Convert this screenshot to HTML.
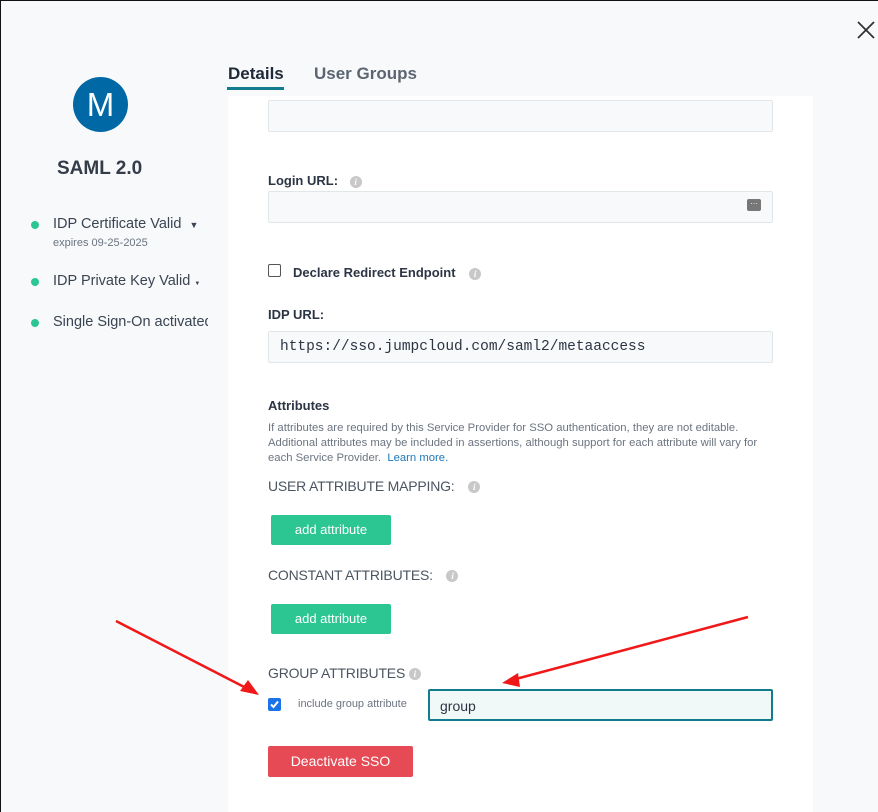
<!DOCTYPE html>
<html><head><meta charset="utf-8">
<style>
*{box-sizing:border-box;margin:0;padding:0}
body{width:878px;height:812px;overflow:hidden;background:#f7f9fb;font-family:"Liberation Sans",sans-serif;color:#2c3543;position:relative}
.frame{position:absolute;left:0;top:0;width:878px;height:812px;border-top:1px solid #111;border-left:1px solid #111;pointer-events:none}
.a{position:absolute}
.panel{left:228px;top:96px;width:585px;height:716px;background:#fff}
.inp{position:absolute;left:268px;width:505px;height:32px;background:#f7f9fa;border:1.5px solid #e1e7e8;border-radius:2px}
.lbl{position:absolute;left:268px;font-size:13px;font-weight:bold;color:#2c3543}
.info{display:inline-block;width:12px;height:12px;border-radius:50%;background:#c8c8c8;color:#fff;font-size:9px;font-style:italic;font-weight:bold;text-align:center;line-height:12px;vertical-align:middle;font-family:"Liberation Serif",serif}
.cap{position:absolute;left:268px;font-size:14px;color:#4a5561;letter-spacing:-0.2px}
.btn{position:absolute;left:271px;width:120px;height:30px;background:#2cc693;color:#fff;font-size:13px;text-align:center;line-height:30px;border-radius:2px}
.dot{position:absolute;left:31px;width:8px;height:8px;border-radius:50%;background:#2cc693}
.side{position:absolute;left:53px;font-size:14.5px;color:#3a4452;white-space:nowrap;overflow:hidden;width:155px}
</style></head><body>
<div class="a" style="left:856px;top:20px">
<svg width="20" height="20" viewBox="0 0 20 20"><path d="M2 2L18 18M18 2L2 18" stroke="#333" stroke-width="1.8"/></svg></div>

<div class="a" style="left:73px;top:77px;width:55px;height:55px;border-radius:50%;background:#0068a5;color:#fff;font-size:33px;text-align:center;line-height:55px">M</div>
<div class="a" style="left:57px;top:158px;font-size:19px;font-weight:bold;color:#333c48">SAML 2.0</div>
<div class="dot" style="top:221px"></div>
<div class="side" style="top:216px">IDP Certificate Valid <span style="font-size:9px;margin-left:4px">▼</span></div>
<div class="a" style="left:53px;top:237px;font-size:11px;color:#6b7480">expires 09-25-2025</div>
<div class="dot" style="top:278px"></div>
<div class="side" style="top:273px">IDP Private Key Valid <span style="font-size:6px">▼</span></div>
<div class="dot" style="top:319px"></div>
<div class="side" style="top:314px">Single Sign-On activated</div>

<div class="a" style="left:228px;top:64px;font-size:17px;font-weight:bold;color:#1f2a38">Details</div>
<div class="a" style="left:227px;top:87px;width:57px;height:3px;background:#127c8e"></div>
<div class="a" style="left:314px;top:64px;font-size:17px;font-weight:bold;color:#5c6672">User Groups</div>

<div class="a panel"></div>
<div class="inp" style="top:100px"></div>
<div class="lbl" style="top:173px">Login URL: <span class="info" style="margin-left:8px">i</span></div>
<div class="inp" style="top:191px"><div class="a" style="right:11px;top:7px;width:14px;height:12px;background:#777;border-radius:2px;color:#fff;font-size:8px;line-height:9px;text-align:center">···</div></div>
<div class="a" style="left:268px;top:264px;width:13px;height:13px;border:1.5px solid #555;border-radius:2px;background:#fff"></div>
<div class="lbl" style="left:293px;top:265px">Declare Redirect Endpoint <span class="info" style="margin-left:10px">i</span></div>
<div class="lbl" style="top:307px">IDP URL:</div>
<div class="inp" style="top:331px;font-family:'Liberation Mono',monospace;font-size:14.5px;color:#2c3543;padding:7px 0 0 11px">https://sso.jumpcloud.com/saml2/metaaccess</div>

<div class="lbl" style="top:398px">Attributes</div>
<div class="a" style="left:268px;top:421px;width:540px;font-size:11.3px;line-height:15px;color:#6b7480;white-space:nowrap">If attributes are required by this Service Provider for SSO authentication, they are not editable.<br>Additional attributes may be included in assertions, although support for each attribute will vary for<br>each Service Provider. &nbsp;<span style="color:#1d78b8">Learn more.</span></div>
<div class="cap" style="top:478px">USER ATTRIBUTE MAPPING: <span class="info" style="margin-left:10px">i</span></div>
<div class="btn" style="top:515px">add attribute</div>
<div class="cap" style="top:567px">CONSTANT ATTRIBUTES: <span class="info" style="margin-left:10px">i</span></div>
<div class="btn" style="top:604px">add attribute</div>
<div class="cap" style="top:665px">GROUP ATTRIBUTES <span class="info">i</span></div>
<div class="a" style="left:268px;top:698px;width:13px;height:13px;background:#1a73e8;border-radius:2px"><svg width="13" height="13" viewBox="0 0 13 13" style="display:block"><path d="M3 6.5L5.5 9L10 3.5" stroke="#fff" stroke-width="2" fill="none"/></svg></div>
<div class="a" style="left:298px;top:698px;font-size:11px;color:#6b7480">include group attribute</div>
<div class="a" style="left:428px;top:689px;width:345px;height:32px;border:2px solid #127c8e;background:#f1f9f8;border-radius:2px;font-size:14px;padding:7px 0 0 10px;color:#2c3543">group</div>
<div class="a" style="left:268px;top:746px;width:145px;height:31px;background:#e54a55;color:#fff;font-size:14px;text-align:center;line-height:31px;border-radius:2px">Deactivate SSO</div>

<svg class="a" style="left:0;top:0" width="878" height="812">
<path d="M116 621L250 690" stroke="#f01818" stroke-width="2.5"/>
<path d="M259 695L240 691L248 680Z" fill="#f01818"/>
<path d="M748 617L512 680" stroke="#f01818" stroke-width="2.5"/>
<path d="M502 683L518 673L520 687Z" fill="#f01818"/>
</svg>
<div class="frame"></div>
</body></html>
